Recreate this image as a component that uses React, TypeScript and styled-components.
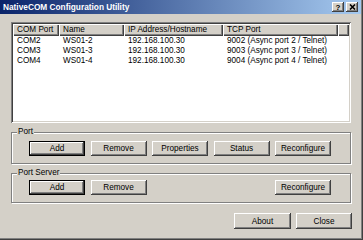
import React from 'react';
import styled, { createGlobalStyle } from 'styled-components';

const GlobalStyle = createGlobalStyle`
  html, body {
    margin: 0;
    padding: 0;
    background: #d4d0c8;
  }
  body {
    font-family: "Liberation Sans", Arial, sans-serif;
    font-size: 8.2px;
    color: #000;
  }
`;

const Window = styled.div`
  width: 363px;
  height: 240px;
  box-sizing: border-box;
  display: flex;
  flex-direction: column;
  background: #d4d0c8;
  box-shadow: inset -1px -1px #404040, inset -2px -2px #808080;
`;

const TitleBar = styled.div`
  height: 14px;
  margin-right: 2px;
  padding: 0 3px 0 3px;
  display: flex;
  align-items: center;
  background: linear-gradient(to right, #0a246a, #a6caf0);
  color: #fff;
  font-weight: bold;
  font-size: 8.3px;
`;

const TitleText = styled.div`
  flex: 1;
  white-space: nowrap;
`;

const CaptionButton = styled.div`
  width: 12px;
  height: 10px;
  margin-left: 2px;
  display: flex;
  align-items: center;
  justify-content: center;
  background: #d4d0c8;
  color: #000;
  font-size: 8px;
  font-weight: bold;
  box-shadow: inset -1px -1px #404040, inset 1px 1px #fff, inset -2px -2px #808080;
`;

const Body = styled.div`
  flex: 1;
  padding: 8px 12px 0 11px;
  display: flex;
  flex-direction: column;
`;

const ListView = styled.div`
  height: 101px;
  box-sizing: border-box;
  padding: 2px;
  background: #fff;
  box-shadow: inset 1px 1px #808080, inset -1px -1px #fff, inset 2px 2px #404040,
    inset -2px -2px #d4d0c8;
`;

const columns = '46px 65px 99px 115px 1fr';

const HeaderRow = styled.div`
  display: grid;
  grid-template-columns: ${columns};
  height: 12px;
`;

const HeaderCell = styled.div`
  padding-left: 4px;
  line-height: 12px;
  white-space: nowrap;
  overflow: hidden;
  background: #d4d0c8;
  box-shadow: inset 1px 1px #fff, inset -1px -1px #404040, inset -2px -2px #808080;
`;

const Row = styled.div`
  display: grid;
  grid-template-columns: ${columns};
  height: 10px;
  line-height: 10px;
`;

const Cell = styled.div`
  padding-left: 4px;
  white-space: nowrap;
  overflow: hidden;
`;

const Group = styled.fieldset<{ $top: number }>`
  margin: 4px 0 0 0;
  padding: ${(p) => p.$top}px 0 7px 17px;
  min-width: 0;
  border: 1px solid #808080;
  box-shadow: inset 1px 1px #fff, 1px 1px #fff;
`;

const Legend = styled.legend`
  margin-left: -12px;
  padding: 0 1px;
  font-size: 8.2px;
  line-height: 10px;
  background: #d4d0c8;
`;

const ButtonRow = styled.div`
  display: grid;
  grid-template-columns: repeat(5, 56px);
  column-gap: 5.5px;
`;

const Button = styled.button<{ $default?: boolean; $col?: number; $w?: number; $h?: number }>`
  width: ${(p) => p.$w ?? 56}px;
  height: ${(p) => p.$h ?? 15}px;
  padding: 0;
  border: none;
  background: #d4d0c8;
  font-family: "Liberation Sans", Arial, sans-serif;
  font-size: 8.2px;
  color: #000;
  grid-column: ${(p) => p.$col ?? 'auto'};
  box-shadow: ${(p) =>
    p.$default
      ? 'inset 0 0 0 1px #000, inset -2px -2px #404040, inset 2px 2px #fff, inset -3px -3px #808080'
      : 'inset -1px -1px #404040, inset 1px 1px #fff, inset -2px -2px #808080'};
`;

const Footer = styled.div`
  margin: 10px -1px 0 0;
  display: flex;
  justify-content: flex-end;
  gap: 5px;
`;

const ports = [
  { com: 'COM2', name: 'WS01-2', ip: '192.168.100.30', tcp: '9002 (Async port 2 / Telnet)' },
  { com: 'COM3', name: 'WS01-3', ip: '192.168.100.30', tcp: '9003 (Async port 3 / Telnet)' },
  { com: 'COM4', name: 'WS01-4', ip: '192.168.100.30', tcp: '9004 (Async port 4 / Telnet)' },
];

const CloseGlyph = () => (
  <svg width="7" height="6" viewBox="0 0 7 6">
    <path d="M1 0.5 L6 5.5 M6 0.5 L1 5.5" stroke="#000" strokeWidth="1.6" />
  </svg>
);

const App = () => {
  return (
    <>
      <GlobalStyle />
      <Window>
        <TitleBar>
          <TitleText>NativeCOM Configuration Utility</TitleText>
          <CaptionButton>?</CaptionButton>
          <CaptionButton>
            <CloseGlyph />
          </CaptionButton>
        </TitleBar>
        <Body>
          <ListView>
            <HeaderRow>
              <HeaderCell>COM Port</HeaderCell>
              <HeaderCell>Name</HeaderCell>
              <HeaderCell>IP Address/Hostname</HeaderCell>
              <HeaderCell>TCP Port</HeaderCell>
              <HeaderCell />
            </HeaderRow>
            {ports.map((p) => (
              <Row key={p.com}>
                <Cell>{p.com}</Cell>
                <Cell>{p.name}</Cell>
                <Cell>{p.ip}</Cell>
                <Cell>{p.tcp}</Cell>
                <Cell />
              </Row>
            ))}
          </ListView>
          <Group $top={4}>
            <Legend>Port</Legend>
            <ButtonRow>
              <Button $default>Add</Button>
              <Button>Remove</Button>
              <Button>Properties</Button>
              <Button>Status</Button>
              <Button>Reconfigure</Button>
            </ButtonRow>
          </Group>
          <Group $top={2}>
            <Legend>Port Server</Legend>
            <ButtonRow>
              <Button $default>Add</Button>
              <Button>Remove</Button>
              <Button $col={5}>Reconfigure</Button>
            </ButtonRow>
          </Group>
          <Footer>
            <Button $w={57} $h={16}>About</Button>
            <Button $h={16}>Close</Button>
          </Footer>
        </Body>
      </Window>
    </>
  );
};

export default App;
